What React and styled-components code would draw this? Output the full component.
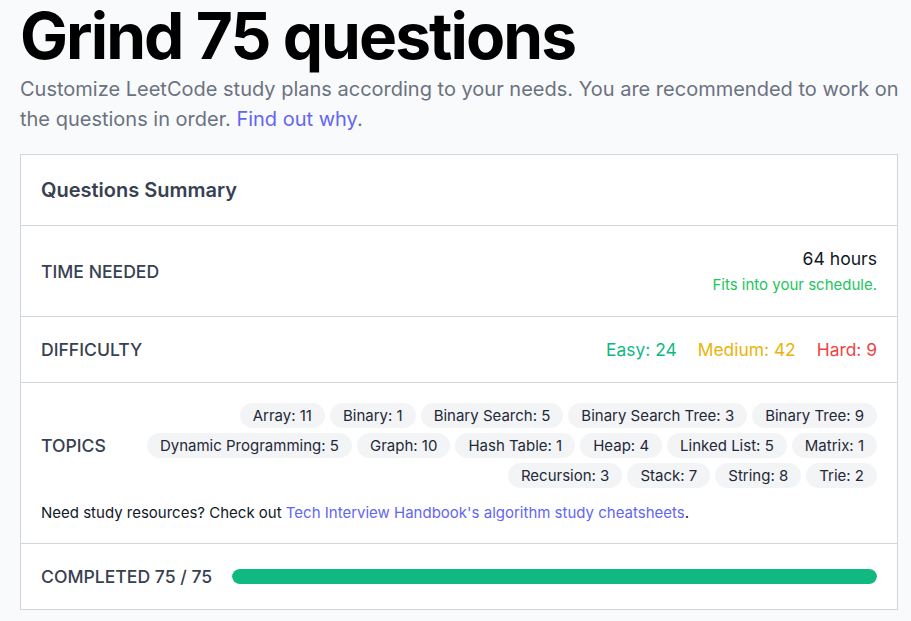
import React from "react";
import styled, { createGlobalStyle } from "styled-components";

const topics = [
  ["Array", 11],
  ["Binary", 1],
  ["Binary Search", 5],
  ["Binary Search Tree", 3],
  ["Binary Tree", 9],
  ["Dynamic Programming", 5],
  ["Graph", 10],
  ["Hash Table", 1],
  ["Heap", 4],
  ["Linked List", 5],
  ["Matrix", 1],
  ["Recursion", 3],
  ["Stack", 7],
  ["String", 8],
  ["Trie", 2],
];

const done = 75;
const total = 75;

function App() {
  return (
    <Page>
      <GlobalStyle />
      <Title>Grind 75 questions</Title>
      <Intro>
        Customize LeetCode study plans according to your needs. You are
        recommended to work on the questions in order.{" "}
        <Link href="#">Find out why</Link>.
      </Intro>
      <Card>
        <CardHeader>Questions Summary</CardHeader>
        <Row>
          <Label>Time needed</Label>
          <RightCol>
            <Hours>64 hours</Hours>
            <Fits>Fits into your schedule.</Fits>
          </RightCol>
        </Row>
        <Row>
          <Label>Difficulty</Label>
          <DiffList>
            <Diff color="#10b981">Easy: 24</Diff>
            <Diff color="#eab308">Medium: 42</Diff>
            <Diff color="#ef4444">Hard: 9</Diff>
          </DiffList>
        </Row>
        <TopicsRow>
          <TopicsTop>
            <Label>Topics</Label>
            <Chips>
              {topics.map(([name, n]) => (
                <Chip key={name}>
                  {name}: {n}
                </Chip>
              ))}
            </Chips>
          </TopicsTop>
          <Resources>
            Need study resources? Check out{" "}
            <Link href="#">
              Tech Interview Handbook's algorithm study cheatsheets
            </Link>
            .
          </Resources>
        </TopicsRow>
        <Row>
          <Label>
            Completed {done} / {total}
          </Label>
          <Track>
            <Fill style={{ width: `${(done / total) * 100}%` }} />
          </Track>
        </Row>
      </Card>
    </Page>
  );
}

const GlobalStyle = createGlobalStyle`
  body {
    margin: 0;
    background: #f9fafb;
    font-family: Inter, "Noto Sans", sans-serif;
    color: #111827;
  }
`;

const Page = styled.div`
  padding: 1px 8px 12px 20px;
`;

const Title = styled.h1`
  margin: 0;
  font-size: 64px;
  line-height: 70px;
  font-weight: 700;
  letter-spacing: -0.03em;
  color: #000;
`;

const Intro = styled.p`
  margin: 3px 0 20px;
  font-size: 20px;
  line-height: 30px;
  color: #6b7280;
`;

const Link = styled.a`
  color: #6366f1;
  text-decoration: none;
`;

const Card = styled.div`
  margin-right: 5px;
  background: #fff;
  border: 1px solid #d1d5db;
`;

const CardHeader = styled.div`
  padding: 21px 20px;
  font-size: 20px;
  line-height: 28px;
  font-weight: 600;
  color: #374151;
  border-bottom: 1px solid #d1d5db;
`;

const Row = styled.div`
  display: flex;
  align-items: center;
  justify-content: space-between;
  gap: 20px;
  padding: 20px;
  border-bottom: 1px solid #d1d5db;
  &:last-child {
    border-bottom: none;
  }
`;

const Label = styled.div`
  flex-shrink: 0;
  font-size: 17.6px;
  line-height: 25px;
  font-weight: 500;
  text-transform: uppercase;
  color: #374151;
`;

const RightCol = styled.div`
  display: flex;
  flex-direction: column;
  align-items: flex-end;
  gap: 2px;
`;

const Hours = styled.div`
  font-size: 17.6px;
  line-height: 26px;
  color: #111827;
`;

const Fits = styled.div`
  font-size: 15px;
  line-height: 22px;
  color: #22c55e;
`;

const DiffList = styled.div`
  display: flex;
  gap: 21px;
`;

const Diff = styled.span`
  font-size: 17.4px;
  line-height: 25px;
  color: ${(p) => p.color};
`;

const TopicsRow = styled.div`
  padding: 20px 20px 19px;
  border-bottom: 1px solid #d1d5db;
`;

const TopicsTop = styled.div`
  display: flex;
  align-items: center;
  gap: 20px;
`;

const Chips = styled.div`
  flex: 1;
  display: flex;
  flex-wrap: wrap;
  justify-content: flex-end;
  gap: 5px;
`;

const Chip = styled.span`
  padding: 0 13px;
  border-radius: 999px;
  background: #f3f4f6;
  font-size: 15px;
  line-height: 25px;
  color: #1f2937;
`;

const Resources = styled.p`
  margin: 14px 0 0;
  font-size: 15px;
  line-height: 22px;
  color: #111827;
`;

const Track = styled.div`
  flex: 1;
  height: 15px;
  border-radius: 999px;
  background: #e5e7eb;
  overflow: hidden;
`;

const Fill = styled.div`
  height: 100%;
  border-radius: 999px;
  background: #10b981;
`;

export default App;
